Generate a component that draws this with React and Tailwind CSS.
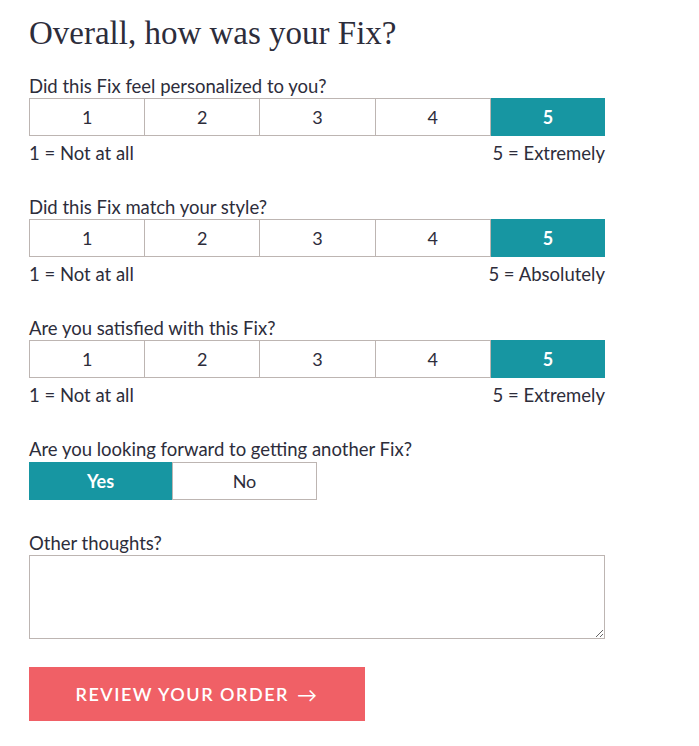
import React, { useState } from 'react';

const questions = [
  { label: 'Did this Fix feel personalized to you?', high: '5 = Extremely' },
  { label: 'Did this Fix match your style?', high: '5 = Absolutely' },
  { label: 'Are you satisfied with this Fix?', high: '5 = Extremely' },
];

function RatingRow({ label, high }) {
  const [value, setValue] = useState(5);
  return (
    <div className="mb-[32px]">
      <p className="text-[18.5px] leading-[22px] mb-[1px]">{label}</p>
      <div className="flex w-[576px] h-[38px] border border-[#bdb5b2]">
        {[1, 2, 3, 4, 5].map((n) => (
          <button
            key={n}
            onClick={() => setValue(n)}
            className={
              n === value
                ? 'flex-1 bg-[#1796a2] text-white font-bold text-[18px] -my-px -mr-px'
                : 'flex-1 border-r border-[#bdb5b2] text-[18px] text-[#2d2d3b]'
            }
          >
            {n}
          </button>
        ))}
      </div>
      <div className="flex justify-between w-[576px] mt-[6px] text-[18.5px] leading-[22px]">
        <span>1 = Not at all</span>
        <span>{high}</span>
      </div>
    </div>
  );
}

export default function App() {
  const [again, setAgain] = useState(true);

  return (
    <div className="px-[29px] pt-[14px] text-[#2d2d3b] font-['Lato',sans-serif] bg-white min-h-[746px]">
      <h1 className="font-['Liberation_Serif',serif] text-[33px] leading-[38px] mb-[23px]">
        Overall, how was your Fix?
      </h1>

      {questions.map((q) => (
        <RatingRow key={q.label} label={q.label} high={q.high} />
      ))}

      <p className="text-[18.5px] leading-[22px] mb-[2px]">Are you looking forward to getting another Fix?</p>
      <div className="flex w-[288px] h-[38px] mb-[32px]">
        <button
          onClick={() => setAgain(true)}
          className={
            again
              ? 'flex-1 bg-[#1796a2] text-white font-bold text-[18px]'
              : 'flex-1 border border-[#bdb5b2] text-[18px]'
          }
        >
          Yes
        </button>
        <button
          onClick={() => setAgain(false)}
          className={
            !again
              ? 'flex-1 bg-[#1796a2] text-white font-bold text-[18px]'
              : 'flex-1 border border-[#bdb5b2] text-[18px]'
          }
        >
          No
        </button>
      </div>

      <p className="text-[18.5px] leading-[22px] mb-[1px]">Other thoughts?</p>
      <textarea className="block w-[576px] h-[84px] border border-[#bdb5b2] mb-[28px] outline-none p-2" />

      <button className="flex items-center justify-center gap-2 w-[336px] h-[54px] bg-[#f06066] text-white text-[18px] font-semibold tracking-[1.5px]">
        REVIEW YOUR ORDER
        <span className="text-[20px] font-normal leading-none">&rarr;</span>
      </button>
    </div>
  );
}
